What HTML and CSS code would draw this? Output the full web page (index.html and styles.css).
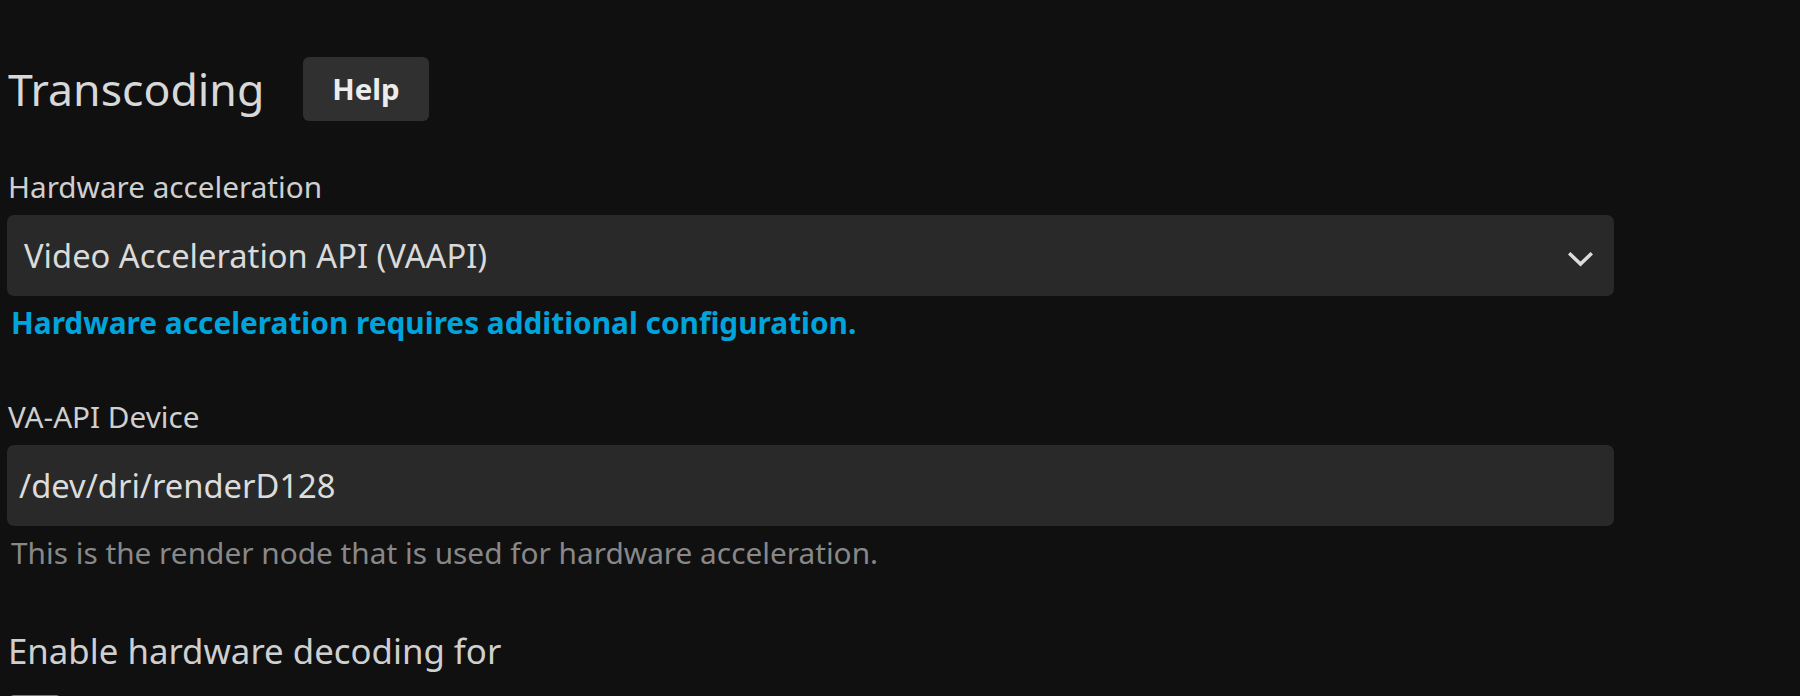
FILE: index.html
```html
<!DOCTYPE html>
<html lang="en">
<head>
<meta charset="utf-8">
<title>Transcoding</title>
<link rel="stylesheet" href="styles.css">
</head>
<body>
<div class="page">
  <div class="header">
    <h2 class="title">Transcoding</h2>
    <button class="help-btn">Help</button>
  </div>

  <div class="field">
    <label class="label">Hardware acceleration</label>
    <div class="select">
      <span class="select-text">Video Acceleration API (VAAPI)</span>
      <svg class="chevron" width="25" height="15" viewBox="0 0 25 15"><polyline points="2.5,2.5 12.5,12 22.5,2.5" fill="none" stroke="#dcdcdc" stroke-width="3.6" stroke-linecap="square"/></svg>
    </div>
    <div class="note">Hardware acceleration requires additional configuration.</div>
  </div>

  <div class="field field-2">
    <label class="label">VA-API Device</label>
    <div class="input">/dev/dri/renderD128</div>
    <div class="desc">This is the render node that is used for hardware acceleration.</div>
  </div>

  <h3 class="heading">Enable hardware decoding for</h3>
  <div class="checkbox"></div>
</div>
</body>
</html>
```

FILE: styles.css
```css
html, body {
  margin: 0;
  padding: 0;
  background: #101010;
  overflow: hidden;
  height: 696px;
}
body {
  font-family: "Noto Sans", sans-serif;
  color: #d4d4d4;
}
.page {
  padding: 57px 0 0 7px;
  width: 1607px;
}
.header {
  display: flex;
  align-items: center;
  height: 64px;
}
.title {
  margin: 0;
  font-size: 44.6px;
  font-weight: 400;
  line-height: 64px;
  color: #d8d8d8;
  padding-left: 1px;
}
.help-btn {
  margin: 0 0 0 39px;
  height: 64px;
  padding: 0 29px;
  border: 0;
  border-radius: 6px;
  background: #303030;
  color: #ececec;
  font-family: "Noto Sans", sans-serif;
  font-weight: 700;
  font-size: 29.4px;
  line-height: 64px;
}
.field {
  margin-top: 45.5px;
}
.field-2 {
  margin-top: 54px;
}
.label {
  display: block;
  font-size: 29.7px;
  line-height: 40px;
  color: #cfcfcf;
  margin-bottom: 8.5px;
  padding-left: 1px;
}
.select {
  height: 81px;
  background: #292929;
  border-radius: 7px;
  display: flex;
  align-items: center;
  justify-content: space-between;
  padding: 0 21px 0 17px;
}
.select-text {
  font-size: 32.7px;
  line-height: 81px;
  color: #dadada;
}
.chevron {
  display: block;
  margin-top: 7px;
}
.note {
  margin-top: 6.5px;
  padding-left: 4px;
  font-size: 29.8px;
  line-height: 40px;
  font-weight: 700;
  color: #00a4dc;
}
.input {
  height: 81px;
  background: #292929;
  border-radius: 7px;
  padding: 0 12px;
  font-size: 32.7px;
  line-height: 81px;
  color: #dcdcdc;
}
.desc {
  margin-top: 6.5px;
  padding-left: 4px;
  font-size: 29.8px;
  line-height: 40px;
  color: #888888;
}
.heading {
  margin: 54px 0 0 0;
  font-size: 34.8px;
  font-weight: 400;
  line-height: 48px;
  color: #cfcfcf;
  padding-left: 1px;
}
.checkbox {
  margin: 20.6px 0 0 3px;
  width: 50px;
  height: 50px;
  border-radius: 4px;
  background: #00a4dc;
}
```
